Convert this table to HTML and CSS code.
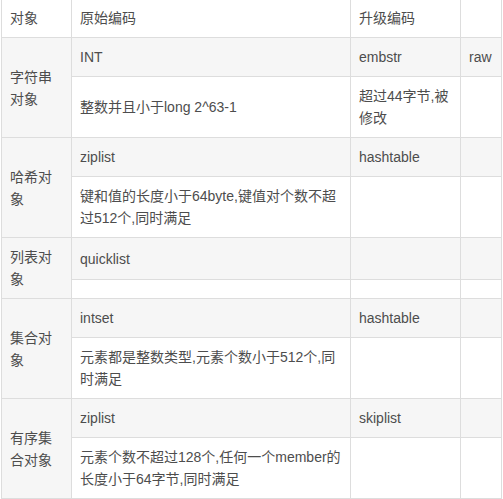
FILE: index.html
```html
<!DOCTYPE html>
<html lang="zh">
<head>
<meta charset="utf-8">
<link rel="stylesheet" href="styles.css">
</head>
<body>
<div class="wrap">
<table class="enc">
<colgroup>
<col class="c1"><col class="c2"><col class="c3"><col class="c4">
</colgroup>
<tbody>
<tr><td>对象</td><td>原始编码</td><td>升级编码</td><td></td></tr>
<tr><td rowspan="2">字符串对象</td><td>INT</td><td>embstr</td><td>raw</td></tr>
<tr><td>整数并且小于long 2^63-1</td><td>超过44字节,被修改</td><td></td></tr>
<tr><td rowspan="2">哈希对象</td><td>ziplist</td><td>hashtable</td><td></td></tr>
<tr><td>键和值的长度小于64byte,键值对个数不超过512个,同时满足</td><td></td><td></td></tr>
<tr><td rowspan="2">列表对象</td><td>quicklist</td><td></td><td></td></tr>
<tr><td></td><td></td><td></td></tr>
<tr><td rowspan="2">集合对象</td><td>intset</td><td>hashtable</td><td></td></tr>
<tr><td>元素都是整数类型,元素个数小于512个,同时满足</td><td></td><td></td></tr>
<tr><td rowspan="2">有序集合对象</td><td>ziplist</td><td>skiplist</td><td></td></tr>
<tr><td>元素个数不超过128个,任何一个member的长度小于64字节,同时满足</td><td></td><td></td></tr>
</tbody>
</table>
</div>
</body>
</html>
```

FILE: styles.css
```css
html, body {
  margin: 0;
  padding: 0;
  background: #ffffff;
}
.wrap {
  padding: 0 1px;
}
.enc {
  margin-top: -2px;
  width: 500px;
  table-layout: fixed;
  border-collapse: collapse;
  font-family: "Liberation Sans", "Noto Sans CJK SC", sans-serif;
  font-size: 14px;
  line-height: 22px;
  color: #4d4d4d;
}
.c1 { width: 70px; }
.c2 { width: 279px; }
.c3 { width: 110px; }
.c4 { width: 41px; }
.enc td {
  border: 1px solid #dddddd;
  padding: 8px;
  vertical-align: middle;
  word-wrap: break-word;
}
.enc tr:nth-child(even) {
  background: #f6f6f6;
}
```
